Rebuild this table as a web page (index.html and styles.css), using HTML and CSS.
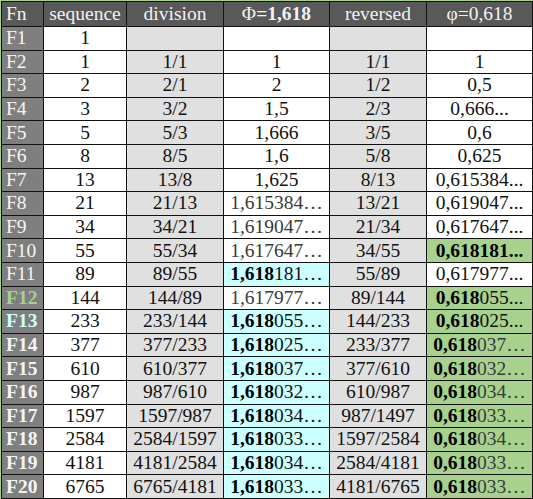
FILE: index.html
```html
<!DOCTYPE html>
<html>
<head>
<meta charset="utf-8">
<link rel="stylesheet" href="styles.css">
</head>
<body>
<table class="fib">
<colgroup>
<col class="c-fn"><col class="c-seq"><col class="c-div"><col class="c-phi"><col class="c-rev"><col class="c-phi2">
</colgroup>
<thead>
<tr class="head"><th class="fn">Fn</th><th>sequence</th><th>division</th><th>Φ<b>=1,618</b></th><th>reversed</th><th>φ=0,618</th></tr>
</thead>
<tbody>
<tr><td class="fn">F1</td><td>1</td><td class="gr"></td><td></td><td class="gr"></td><td></td></tr>
<tr><td class="fn">F2</td><td>1</td><td class="gr">1/1</td><td>1</td><td class="gr">1/1</td><td>1</td></tr>
<tr><td class="fn">F3</td><td>2</td><td class="gr">2/1</td><td>2</td><td class="gr">1/2</td><td>0,5</td></tr>
<tr><td class="fn">F4</td><td>3</td><td class="gr">3/2</td><td>1,5</td><td class="gr">2/3</td><td>0,666...</td></tr>
<tr><td class="fn">F5</td><td>5</td><td class="gr">5/3</td><td>1,666</td><td class="gr">3/5</td><td>0,6</td></tr>
<tr><td class="fn">F6</td><td>8</td><td class="gr">8/5</td><td>1,6</td><td class="gr">5/8</td><td>0,625</td></tr>
<tr><td class="fn">F7</td><td>13</td><td class="gr">13/8</td><td>1,625</td><td class="gr">8/13</td><td>0,615384...</td></tr>
<tr><td class="fn">F8</td><td>21</td><td class="gr">21/13</td><td class="soft">1,615384…</td><td class="gr">13/21</td><td>0,619047...</td></tr>
<tr><td class="fn">F9</td><td>34</td><td class="gr">34/21</td><td class="soft">1,619047…</td><td class="gr">21/34</td><td>0,617647...</td></tr>
<tr><td class="fn">F10</td><td>55</td><td class="gr">55/34</td><td class="soft">1,617647…</td><td class="gr">34/55</td><td class="gn"><b>0,618181...</b></td></tr>
<tr><td class="fn">F11</td><td>89</td><td class="gr">89/55</td><td class="cy"><b>1,618</b>181…</td><td class="gr">55/89</td><td>0,617977...</td></tr>
<tr><td class="fn bold lg">F12</td><td>144</td><td class="gr">144/89</td><td class="soft">1,617977…</td><td class="gr">89/144</td><td class="gn"><b>0,618</b>055...</td></tr>
<tr><td class="fn bold lc">F13</td><td>233</td><td class="gr">233/144</td><td class="cy"><b>1,618</b>055…</td><td class="gr">144/233</td><td class="gn"><b>0,618</b>025...</td></tr>
<tr><td class="fn bold">F14</td><td>377</td><td class="gr">377/233</td><td class="cy"><b>1,618</b>025…</td><td class="gr">233/377</td><td class="gn"><b>0,618</b><span class="soft">037…</span></td></tr>
<tr><td class="fn bold">F15</td><td>610</td><td class="gr">610/377</td><td class="cy"><b>1,618</b>037…</td><td class="gr">377/610</td><td class="gn"><b>0,618</b><span class="soft">032…</span></td></tr>
<tr><td class="fn bold">F16</td><td>987</td><td class="gr">987/610</td><td class="cy"><b>1,618</b>032…</td><td class="gr">610/987</td><td class="gn"><b>0,618</b><span class="soft">034…</span></td></tr>
<tr><td class="fn bold">F17</td><td>1597</td><td class="gr">1597/987</td><td class="cy"><b>1,618</b>034…</td><td class="gr">987/1497</td><td class="gn"><b>0,618</b><span class="soft">033…</span></td></tr>
<tr><td class="fn bold">F18</td><td>2584</td><td class="gr">2584/1597</td><td class="cy"><b>1,618</b>033…</td><td class="gr">1597/2584</td><td class="gn"><b>0,618</b><span class="soft">034…</span></td></tr>
<tr><td class="fn bold">F19</td><td>4181</td><td class="gr">4181/2584</td><td class="cy"><b>1,618</b>034…</td><td class="gr">2584/4181</td><td class="gn"><b>0,618</b><span class="soft">033…</span></td></tr>
<tr><td class="fn bold">F20</td><td>6765</td><td class="gr">6765/4181</td><td class="cy"><b>1,618</b>033…</td><td class="gr">4181/6765</td><td class="gn"><b>0,618</b><span class="soft">033…</span></td></tr>
</tbody>
</table>
</body>
</html>
```

FILE: styles.css
```css
html, body {
  margin: 0;
  padding: 0;
  background: #a9d18e;
}
body {
  padding: 1px;
  font-family: "Liberation Serif", Tinos, "Times New Roman", Times, "Noto Serif", "DejaVu Serif", "Nimbus Roman", FreeSerif, Georgia, serif;
  font-size: 19.5px;
  color: #111;
}
.fib {
  border-collapse: collapse;
  table-layout: fixed;
  width: 531px;
  background: #fff;
  font: inherit;
}
.c-fn { width: 42px; }
.c-seq { width: 83px; }
.c-div { width: 97px; }
.c-phi { width: 106px; }
.c-rev { width: 97px; }
.c-phi2 { width: 106px; }
.fib th, .fib td {
  border: 1px solid #111;
  padding: 0 2px;
  text-align: center;
  white-space: nowrap;
  overflow: hidden;
  line-height: 22px;
  font-weight: normal;
}
.fib tbody tr { height: 23.6px; }
.fib thead tr { height: 25px; }
.head th {
  background: #595959;
  color: #f2f2f2;
}
.head th b { font-weight: bold; color: #f2f2f2; }
.fib td.fn {
  background: #7f7f7f;
  color: #f5f5f5;
  text-align: left;
  padding-left: 4px;
}
.head th.fn { text-align: left; padding-left: 4px; }
.fib td.bold { font-weight: bold; }
.fib td.lg { color: #a9d18e; }
.fib td.lc { color: #ccffff; }
.gr { background: #e0e0e0; }
.cy { background: #ccffff; }
.gn { background: #a9d18e; }
.soft { color: #3a3a3a; }
b { font-weight: bold; color: #000; }
```
